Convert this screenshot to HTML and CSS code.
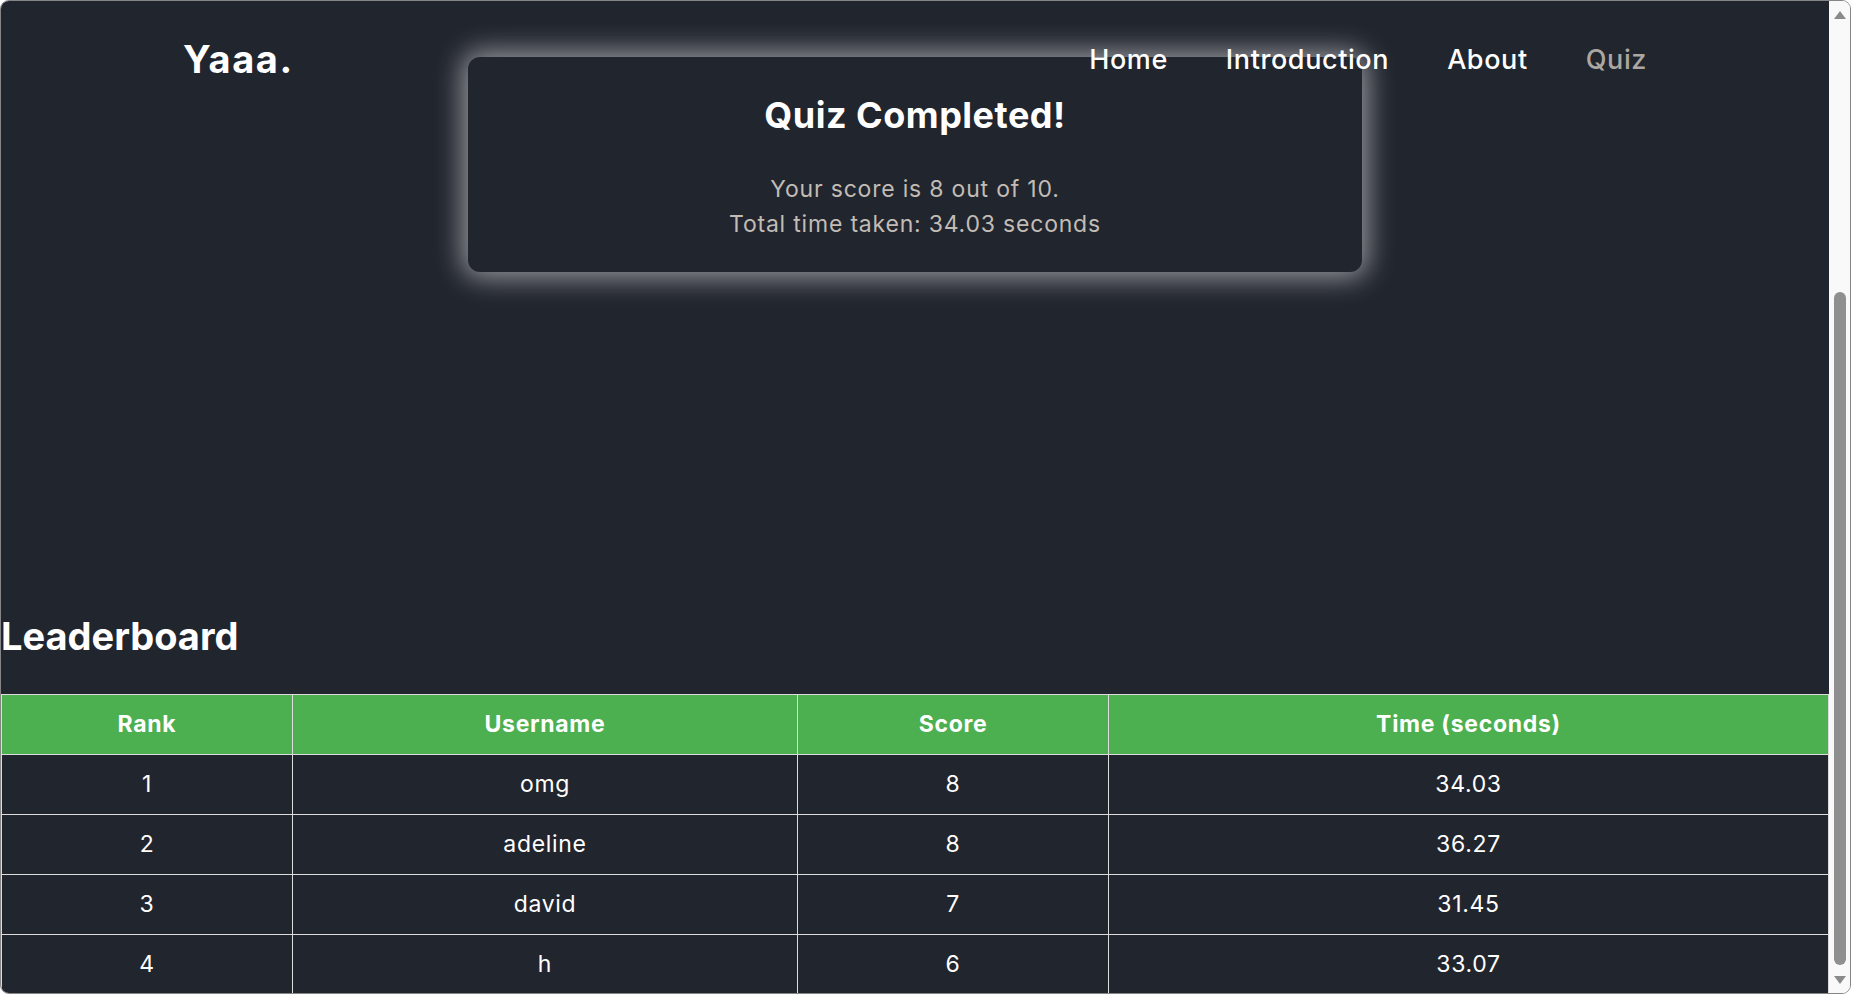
FILE: index.html
```html
<!DOCTYPE html>
<html lang="en">
<head>
<meta charset="utf-8">
<title>Yaaa. Quiz</title>
<link rel="stylesheet" href="styles.css">
</head>
<body>
<div class="window">
  <div class="page">
    <header class="site-header">
      <div class="logo">Yaaa.</div>
      <nav class="nav">
        <a class="nav-link" href="#">Home</a>
        <a class="nav-link" href="#">Introduction</a>
        <a class="nav-link" href="#">About</a>
        <a class="nav-link nav-link--current" href="#">Quiz</a>
      </nav>
    </header>

    <section class="result-card">
      <h2 class="result-title">Quiz Completed!</h2>
      <p class="result-line">Your score is 8 out of 10.</p>
      <p class="result-line">Total time taken: 34.03 seconds</p>
    </section>

    <h2 class="board-title">Leaderboard</h2>
    <table class="board">
      <thead>
        <tr>
          <th class="col-rank">Rank</th>
          <th class="col-user">Username</th>
          <th class="col-score">Score</th>
          <th class="col-time">Time (seconds)</th>
        </tr>
      </thead>
      <tbody>
        <tr><td>1</td><td>omg</td><td>8</td><td>34.03</td></tr>
        <tr><td>2</td><td>adeline</td><td>8</td><td>36.27</td></tr>
        <tr><td>3</td><td>david</td><td>7</td><td>31.45</td></tr>
        <tr><td>4</td><td>h</td><td>6</td><td>33.07</td></tr>
      </tbody>
    </table>
  </div>
  <div class="scrollbar">
    <svg class="scroll-arrow" width="14" height="10" viewBox="0 0 14 10"><path d="M7 1 L13 9 L1 9 Z" fill="#8a8a8a"/></svg>
    <div class="scroll-track"><div class="scroll-thumb"></div></div>
    <svg class="scroll-arrow" width="14" height="10" viewBox="0 0 14 10"><path d="M1 1 L13 1 L7 9 Z" fill="#8a8a8a"/></svg>
  </div>
</div>
</body>
</html>
```

FILE: styles.css
```css
html, body {
  margin: 0;
  padding: 0;
  background: #ffffff;
}

body {
  font-family: "Inter", "Noto Sans", sans-serif;
}

.window {
  box-sizing: border-box;
  height: 994px;
  border: 1px solid #858585;
  border-radius: 9px;
  overflow: hidden;
  display: flex;
}

.page {
  flex: 1;
  position: relative;
  background: #21252e;
  overflow: hidden;
  color: #ffffff;
}

/* header overlays the card */
.site-header {
  position: absolute;
  top: 0;
  left: 0;
  right: 0;
  height: 116px;
  padding: 0 182px;
  display: flex;
  align-items: center;
  justify-content: space-between;
  z-index: 2;
}

.logo {
  font-size: 38px;
  font-weight: 700;
  letter-spacing: 1.6px;
  color: #ffffff;
}

.nav {
  display: flex;
  gap: 58px;
}

.nav-link {
  font-size: 27px;
  font-weight: 500;
  letter-spacing: 0.6px;
  color: #ffffff;
  text-decoration: none;
}

.nav-link--current {
  color: #aca7a1;
}

.result-card {
  box-sizing: border-box;
  width: 894px;
  margin: 56px auto 0;
  padding: 36px 20px 30px;
  background: #21252e;
  border-radius: 12px;
  box-shadow: 0 0 28px 5px rgba(255, 255, 255, 0.55);
  text-align: center;
}

.result-title {
  margin: 0 0 35px;
  font-size: 36px;
  line-height: 44px;
  font-weight: 700;
  letter-spacing: 0.5px;
  color: #ffffff;
}

.result-line {
  margin: 0;
  font-size: 23px;
  line-height: 35px;
  letter-spacing: 0.8px;
  color: #c2bcb5;
}

.board-title {
  margin: 342px 0 36px;
  font-size: 38px;
  line-height: 44px;
  font-weight: 700;
  color: #ffffff;
}

.board {
  width: 100%;
  border-collapse: collapse;
  table-layout: fixed;
}

.board th,
.board td {
  border: 1px solid #dcdcdc;
  padding: 14px 8px;
  line-height: 31px;
  font-size: 23px;
  text-align: center;
  letter-spacing: 0.7px;
}

.board th {
  background: #4caf50;
  font-weight: 700;
  color: #ffffff;
}

.board td {
  font-weight: 400;
  color: #ffffff;
}

.col-rank { width: 274px; }
.col-user { width: 488px; }
.col-score { width: 294px; }

.scrollbar {
  width: 21px;
  background: #f9f9f9;
  display: flex;
  flex-direction: column;
  align-items: center;
  padding: 9px 0 8px;
  box-sizing: border-box;
}

.scroll-arrow {
  flex: none;
}

.scroll-track {
  flex: 1;
  width: 100%;
  display: flex;
  flex-direction: column;
  justify-content: flex-end;
  align-items: center;
  padding: 0 0 10px;
  box-sizing: border-box;
}

.scroll-thumb {
  width: 12px;
  height: 673px;
  border-radius: 6px;
  background: #8f8f8f;
}
```
